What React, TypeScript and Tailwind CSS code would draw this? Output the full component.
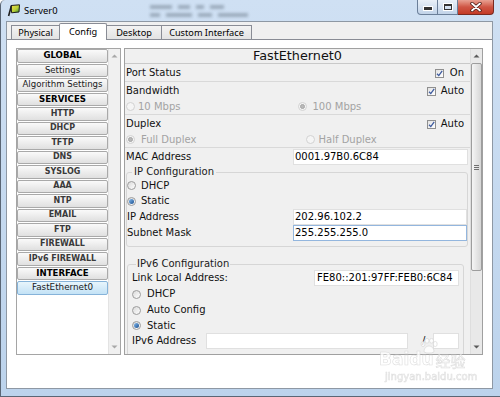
import React from "react";

const sans = "font-['DejaVu_Sans','Verdana',sans-serif]";
const ui = "font-['Noto_Sans','Open_Sans',sans-serif]";

function Radio({ checked = false, disabled = false }: { checked?: boolean; disabled?: boolean }) {
  const ring = disabled
    ? "border-[#d2d2d2] bg-[#f5f5f5]"
    : "border-[#9c9c9c] bg-linear-to-br from-[#d9d9d9] to-white";
  return (
    <span className={`inline-flex w-[9px] h-[9px] shrink-0 rounded-full border ${ring} items-center justify-center`}>
      {checked && (
        <span
          className={`w-[5px] h-[5px] rounded-full ${
            disabled ? "bg-[#b9b9b9] border border-[#a6a6a6]" : "bg-linear-to-br from-[#86bdf0] to-[#1b4f8e]"
          }`}
        />
      )}
    </span>
  );
}

function Check() {
  return (
    <span className="inline-flex w-[9px] h-[9px] shrink-0 border border-[#8f8f8f] bg-linear-to-br from-[#e2e2e2] to-white items-center justify-center">
      <svg width="7" height="7" viewBox="0 0 7 7">
        <path d="M1 3.7 L2.8 5.6 L6.2 0.9" fill="none" stroke="#3d5a9e" strokeWidth="1.3" />
      </svg>
    </span>
  );
}

function Field({ value = "", className = "", focused = false }: { value?: string; className?: string; focused?: boolean }) {
  return (
    <div
      className={`h-[16px] bg-white border ${
        focused ? "border-[#93b6de]" : "border-[#e0e0e0]"
      } flex items-center pl-[1px] text-[10px] leading-none text-black whitespace-nowrap overflow-hidden ${className}`}
    >
      {value}
    </div>
  );
}

function Tri({ up = false, color }: { up?: boolean; color: string }) {
  return (
    <svg width="7" height="4" viewBox="0 0 7 4">
      <path d={up ? "M0.5 3.5 L3.5 0.5 L6.5 3.5 Z" : "M0.5 0.5 L3.5 3.5 L6.5 0.5 Z"} fill={color} />
    </svg>
  );
}

type Item = { label: string; kind: "head" | "svc" | "plain" | "sel" };
const items: Item[] = [
  { label: "GLOBAL", kind: "head" },
  { label: "Settings", kind: "plain" },
  { label: "Algorithm Settings", kind: "plain" },
  { label: "SERVICES", kind: "head" },
  { label: "HTTP", kind: "svc" },
  { label: "DHCP", kind: "svc" },
  { label: "TFTP", kind: "svc" },
  { label: "DNS", kind: "svc" },
  { label: "SYSLOG", kind: "svc" },
  { label: "AAA", kind: "svc" },
  { label: "NTP", kind: "svc" },
  { label: "EMAIL", kind: "svc" },
  { label: "FTP", kind: "svc" },
  { label: "FIREWALL", kind: "svc" },
  { label: "IPv6 FIREWALL", kind: "svc" },
  { label: "INTERFACE", kind: "head" },
  { label: "FastEthernet0", kind: "sel" },
];

function ListItem({ it }: { it: Item }) {
  const base =
    "h-[13.5px] mb-[1px] shrink-0 flex items-center justify-center border rounded-[2px] leading-none whitespace-nowrap";
  let cls = "";
  if (it.kind === "sel") {
    cls = "border-[#86b3d9] bg-linear-to-b from-[#e8f5fc] to-[#c3e2f6] text-[8.8px] text-[#1a1a1a]";
  } else if (it.kind === "head") {
    cls = "border-[#a9a9a9] bg-linear-to-b from-[#fafafa] to-[#e0e0e0] text-[8.6px] font-bold text-black";
  } else if (it.kind === "svc") {
    cls = "border-[#a9a9a9] bg-linear-to-b from-[#fafafa] to-[#e0e0e0] text-[8px] font-bold text-[#3a3a3a]";
  } else {
    cls = "border-[#a9a9a9] bg-linear-to-b from-[#fafafa] to-[#e0e0e0] text-[8.6px] text-[#1a1a1a]";
  }
  return <div className={`${base} ${cls}`}>{it.label}</div>;
}

function TitleBar() {
  return (
    <div className="h-[21px] flex items-center pl-[6px] shrink-0">
      <svg width="14" height="13" viewBox="0 0 14 13" className="shrink-0">
        <defs>
          <linearGradient id="fl" x1="0" y1="0" x2="1" y2="1">
            <stop offset="0" stopColor="#f5e04a" />
            <stop offset="0.55" stopColor="#b9cf3a" />
            <stop offset="1" stopColor="#2f8f2a" />
          </linearGradient>
        </defs>
        <path d="M4 1.5 L12.5 0.8 L12 8 L4.6 8.8 Z" fill="url(#fl)" stroke="#1e1e1e" strokeWidth="1" />
        <path d="M4.3 2 L1.6 12" stroke="#1e1e1e" strokeWidth="1.6" />
      </svg>
      <span className={`${ui} ml-[3px] text-[9.4px] leading-none text-black`}>Server0</span>
      <div className="ml-[92px] flex flex-col gap-[4px] opacity-30 blur-[1.5px]">
        <div className="flex gap-[6px]">
          <div className="w-[22px] h-[4px] bg-[#2d3a48]" />
          <div className="w-[12px] h-[4px] bg-[#2d3a48]" />
          <div className="w-[8px] h-[4px] bg-[#2d3a48]" />
          <div className="w-[14px] h-[4px] bg-[#2d3a48]" />
        </div>
        <div className="flex gap-[6px]">
          <div className="w-[10px] h-[4px] bg-[#2d3a48]" />
          <div className="w-[26px] h-[4px] bg-[#2d3a48]" />
          <div className="w-[14px] h-[4px] bg-[#2d3a48]" />
          <div className="w-[30px] h-[4px] bg-[#2d3a48]" />
        </div>
      </div>
      <div className="ml-auto mr-[6px] self-start flex h-[15px]">
        <div className="w-[21px] h-full border border-t-0 border-[#6b7f99] rounded-bl-[4px] bg-linear-to-b from-[#e9f0f8] to-[#c1d3e9] flex items-end justify-center pb-[3px]">
          <div className="w-[8px] h-[3px] bg-[#333] border border-white box-content" />
        </div>
        <div className="w-[20px] h-full border border-t-0 border-l-0 border-[#6b7f99] bg-linear-to-b from-[#e9f0f8] to-[#c1d3e9] flex items-center justify-center">
          <div className="w-[8px] h-[6px] border border-[#333] border-t-2 outline outline-white" />
        </div>
        <div className="w-[36px] h-full border border-t-0 border-l-0 border-[#7a2a20] rounded-br-[4px] bg-linear-to-b from-[#e8a092] via-[#cf5544] to-[#c33a25] flex items-center justify-center">
          <svg width="12" height="10" viewBox="0 0 12 10">
            <path d="M2 1.5 L10 8.5 M10 1.5 L2 8.5" stroke="#4a1a14" strokeWidth="3.4" strokeLinecap="round" />
            <path d="M2 1.5 L10 8.5 M10 1.5 L2 8.5" stroke="#ffffff" strokeWidth="1.8" strokeLinecap="round" />
          </svg>
        </div>
      </div>
    </div>
  );
}

function Tabs() {
  const un =
    "h-[14px] flex items-center justify-center border-t border-l border-[#898c95] bg-linear-to-b from-[#f3f3f3] to-[#e3e3e3] text-[9.2px] leading-none text-black";
  return (
    <div className={`${ui} h-[17px] flex items-end pl-[4px] shrink-0`}>
      <div className={`${un} w-[48px]`}>Physical</div>
      <div className="w-[48px] h-[17px] -mb-px relative z-10 flex items-center justify-center border border-b-0 border-[#898c95] rounded-t-[2px] bg-white text-[9.2px] leading-none text-black">
        Config
      </div>
      <div className={`${un} w-[54px] border-l-0`}>Desktop</div>
      <div className={`${un} w-[91px] border-r`}>Custom Interface</div>
    </div>
  );
}

function LeftList() {
  return (
    <div className="w-[105px] h-[307px] border border-[#a5a5a5] bg-white flex shrink-0">
      <div className="w-[91px] flex flex-col">
        {items.map((it) => (
          <ListItem key={it.label} it={it} />
        ))}
      </div>
      <div className="w-[12px] flex flex-col bg-[#f0f0f0] border-l border-[#e3e3e3]">
        <div className="h-[14px] flex items-center justify-center">
          <Tri up color="#a8a8a8" />
        </div>
        <div className="flex-1" />
        <div className="h-[14px] flex items-center justify-center">
          <Tri color="#a8a8a8" />
        </div>
      </div>
    </div>
  );
}

function RightPanel() {
  return (
    <div className="ml-[3px] w-[359px] h-[307px] border border-[#a0a0a0] bg-[#f0f0f0] flex shrink-0 text-[10px] leading-none text-[#111]">
      <div className="w-[345px] flex flex-col overflow-hidden">
        <div className="h-[15px] shrink-0 border-b border-[#c9c9c9] flex items-center justify-center text-[12.8px] text-[#111]">
          FastEthernet0
        </div>
        <div className="h-[18px] shrink-0 border-b border-[#d9d9d9] flex items-center pl-[1px] pr-[6px] pt-[1px]">
          <span>Port Status</span>
          <span className="ml-auto flex items-center gap-[6px]">
            <Check />
            On
          </span>
        </div>
        <div className="shrink-0 border-b border-[#d9d9d9]">
          <div className="h-[17px] flex items-center pl-[1px] pr-[6px] pt-[1px]">
            <span>Bandwidth</span>
            <span className="ml-auto flex items-center gap-[5px]">
              <Check />
              Auto
            </span>
          </div>
          <div className="h-[15px] grid grid-cols-2 items-center text-[#a3a3a3]">
            <span className="flex items-center gap-[3px] pl-[1px]">
              <Radio disabled />
              10 Mbps
            </span>
            <span className="flex items-center gap-[6px]">
              <Radio disabled checked />
              100 Mbps
            </span>
          </div>
        </div>
        <div className="shrink-0 border-b border-[#d9d9d9]">
          <div className="h-[17px] flex items-center pl-[1px] pr-[6px] pt-[1px]">
            <span>Duplex</span>
            <span className="ml-auto flex items-center gap-[5px]">
              <Check />
              Auto
            </span>
          </div>
          <div className="h-[15px] grid grid-cols-2 items-center text-[#a3a3a3]">
            <span className="flex items-center gap-[6px] pl-[1px]">
              <Radio disabled checked />
              Full Duplex
            </span>
            <span className="flex items-center gap-[4px] pl-[8px]">
              <Radio disabled />
              Half Duplex
            </span>
          </div>
        </div>
        <div className="h-[18px] shrink-0 flex items-center pl-[1px] pr-[2px]">
          <span>MAC Address</span>
          <Field value="0001.97B0.6C84" className="ml-auto w-[175px]" />
        </div>
        <fieldset className="shrink-0 ml-[1px] mr-[2px] border border-[#d6d6d6] rounded-[3px] pb-[5px] min-w-0">
          <legend className="ml-[5px] px-[2px] h-[12px] leading-[12px] text-[#1a1a1a]">IP Configuration</legend>
          <div className="h-[15px] flex items-center gap-[5px]">
            <Radio />
            DHCP
          </div>
          <div className="h-[16px] flex items-center gap-[5px]">
            <Radio checked />
            Static
          </div>
          <div className="h-[16px] flex items-center">
            <span>IP Address</span>
            <Field value="202.96.102.2" className="ml-auto w-[174px]" />
          </div>
          <div className="h-[16px] flex items-center">
            <span>Subnet Mask</span>
            <Field value="255.255.255.0" className="ml-auto w-[174px]" focused />
          </div>
        </fieldset>
        <fieldset className="shrink-0 mt-[11px] ml-[2px] mr-[6px] border border-[#d6d6d6] rounded-[3px] pl-[4px] pb-[30px] min-w-0">
          <legend className="ml-[4px] px-[1px] h-[12px] leading-[12px] text-[#1a1a1a]">IPv6 Configuration</legend>
          <div className="h-[16px] flex items-center pr-[4px]">
            <span>Link Local Address:</span>
            <Field value="FE80::201:97FF:FEB0:6C84" className="ml-auto w-[145px] pl-[2px]" />
          </div>
          <div className="h-[16px] flex items-center gap-[6px]">
            <Radio />
            DHCP
          </div>
          <div className="h-[16px] flex items-center gap-[6px]">
            <Radio />
            Auto Config
          </div>
          <div className="h-[15px] flex items-center gap-[6px]">
            <Radio checked />
            Static
          </div>
          <div className="h-[16px] flex items-center">
            <span className="w-[74px] shrink-0">IPv6 Address</span>
            <Field className="w-[202px] shrink-0" />
            <span className="w-[25px] shrink-0 pl-[14px]">/</span>
            <Field className="w-[26px] shrink-0" />
          </div>
        </fieldset>
      </div>
      <div className="w-[12px] flex flex-col bg-[#e9e9e9] border-l border-[#dedede]">
        <div className="h-[14px] shrink-0 flex items-center justify-center">
          <Tri up color="#5a5a5a" />
        </div>
        <div className="h-[208px] shrink-0 rounded-[2px] border border-[#9d9d9d] bg-linear-to-r from-[#f5f5f5] to-[#d6d6d6] flex items-center justify-center">
          <div className="flex flex-col gap-[1px]">
            <div className="w-[5px] h-px bg-[#707070]" />
            <div className="w-[5px] h-px bg-[#707070]" />
            <div className="w-[5px] h-px bg-[#707070]" />
          </div>
        </div>
        <div className="flex-1" />
        <div className="h-[14px] shrink-0 flex items-center justify-center">
          <Tri color="#5a5a5a" />
        </div>
      </div>
    </div>
  );
}

function Watermark() {
  const stroke = "text-white [-webkit-text-stroke:0.6px_#d6d6d6]";
  return (
    <div className="absolute left-[378px] top-[338px] flex flex-col items-start pointer-events-none opacity-80">
      <svg width="20" height="16" viewBox="0 0 20 16" className="ml-[40px]">
        <g fill="white" stroke="#d6d6d6" strokeWidth="0.8">
          <ellipse cx="4" cy="6" rx="2" ry="2.6" />
          <ellipse cx="8" cy="2.8" rx="2" ry="2.4" />
          <ellipse cx="12.5" cy="2.8" rx="2" ry="2.4" />
          <ellipse cx="16.2" cy="6" rx="2" ry="2.6" />
          <path d="M5 14 C5 9.5 8 8 10 8 C12 8 15 9.5 15 14 C12.5 15.5 7.5 15.5 5 14 Z" />
        </g>
      </svg>
      <div className={`${sans} h-[17px] flex items-end -mt-[3px] leading-none overflow-visible`}>
        <span className={`${stroke} text-[17px] leading-[17px] font-bold`}>Baidu</span>
        <span className={`${stroke} text-[15px] leading-[15px] ml-[2px] font-['Noto_Sans_CJK_SC',sans-serif]`}>
          经验
        </span>
      </div>
      <span className={`${sans} ${stroke} text-[10px] leading-[10px] mt-[4px] ml-[6px]`}>jingyan.baidu.com</span>
    </div>
  );
}

export default function App() {
  return (
    <div
      className={`relative w-[500px] h-[397px] overflow-hidden flex flex-col bg-linear-to-b from-[#cfe0f3] to-[#bcd3ec] border-b border-l border-[#5a6675] rounded-tl-[5px] ${sans}`}
    >
      <TitleBar />
      <div className="flex-1 pl-[5px] pr-[7px] pb-[7px] flex min-h-0">
        <div className="flex-1 flex flex-col border border-[#8e98a4] bg-[#f0f0f0] min-h-0">
          <Tabs />
          <div className="flex-1 bg-white border-t border-[#898c95] flex items-start pl-[9px] pt-[8px]">
            <LeftList />
            <RightPanel />
          </div>
        </div>
      </div>
      <Watermark />
    </div>
  );
}
